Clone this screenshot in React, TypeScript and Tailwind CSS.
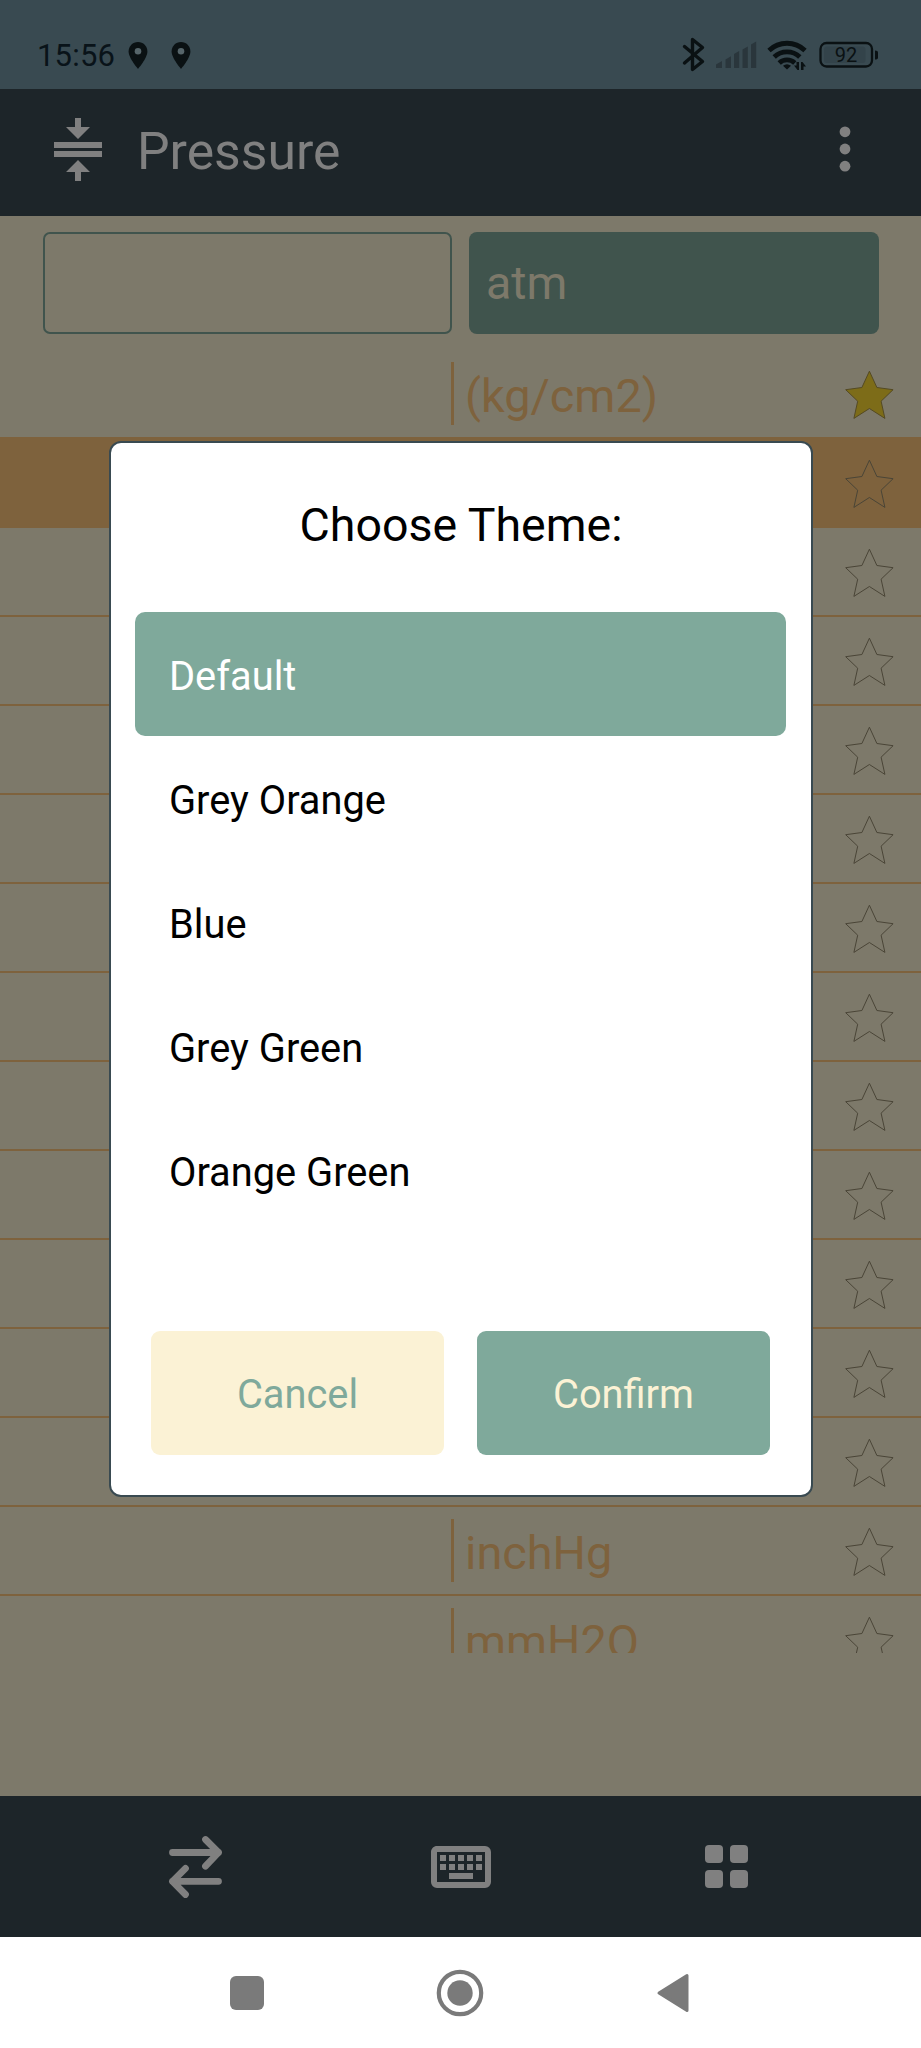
import React from "react";

type Unit = { label?: string; active?: boolean; starred?: boolean };

const units: Unit[] = [
  { label: "(kg/cm2)", starred: true },
  { active: true },
  {}, {}, {}, {}, {}, {}, {}, {}, {}, {}, {},
  { label: "inchHg" },
  { label: "mmH2O" },
];

const themes = ["Default", "Grey Orange", "Blue", "Grey Green", "Orange Green"];

function Pin() {
  return (
    <svg width="20" height="27" viewBox="0 0 20 27">
      <path d="M10 0C4.700 0 .6 4.200 .6 9.400c0 6.600 9.400 17.400 9.400 17.400s9.400-10.800 9.400-17.400C19.400 4.200 15.300 0 10 0z" fill="#0a1113" />
      <circle cx="10" cy="9.300" r="3.300" fill="#56656a" />
    </svg>
  );
}

function StatusBar() {
  return (
    <div className="flex h-[89px] shrink-0 items-start bg-[#394a51] text-[#091319]">
      <div className="flex w-[128px] pl-[37px] pt-[38px] text-[31px] leading-[36px] tracking-[0.2px]">15:56</div>
      <div className="flex gap-[23px] pt-[42px]">
        <Pin />
        <Pin />
      </div>
      <svg className="mt-[34px] ml-auto mr-[41px]" width="200" height="40" viewBox="680 34 200 40">
        <path d="M684.500 46.500 L702.500 61.500 L692.500 69.500 V39.500 L702.500 47.500 L684.500 63" fill="none" stroke="#0a1113" strokeWidth="3.400" strokeLinejoin="round" strokeLinecap="round" />
        <g fill="#2a363c">
          <path d="M716 68v-3.500l6-3.500v7z" />
          <path d="M725.500 68v-8.500l5.500-3.200v11.700z" />
          <path d="M734 68v-14l5.200-3v17z" />
          <path d="M742.500 68v-18.500l5.300-3v21.500z" />
          <path d="M751 68v-23.500l5.200-3v26.500z" />
        </g>
        <g fill="none" stroke="#0a1113" strokeWidth="4.800">
          <path d="M769 50.500 A26 26 0 0 1 805 50.500" />
          <path d="M774.200 57 A18.500 18.500 0 0 1 799.800 57" />
          <path d="M779.200 63 A11.500 11.500 0 0 1 794.800 63" />
        </g>
        <path d="M783 65.800 Q787 62.500 791 65.800 L787 69.500z" fill="#0a1113" />
        <path d="M799 62v8h-1.500l-3.500-4.500h2.500V62zM801 70v-8h1.500l3.500 4.500h-2.500V70z" fill="#0a1113" />
        <rect x="820.500" y="43" width="51.500" height="23.500" rx="6" fill="none" stroke="#0a1113" strokeWidth="2.300" />
        <rect x="824" y="46.500" width="41.500" height="16.500" rx="3" fill="#33434a" />
        <path d="M875 50.500 q3 0 3 2 v5 q0 2 -3 2z" fill="#0a1113" />
        <text x="846" y="62" textAnchor="middle" fontSize="20" fill="#0a1113" fontFamily="Roboto, sans-serif">92</text>
      </svg>
    </div>
  );
}

function Header() {
  return (
    <header className="flex h-[127px] shrink-0 items-center bg-[#1d2529] pl-[42px] pr-[64px] text-[#808080]">
      <svg className="-mt-[4px]" width="72" height="72" viewBox="0 0 24 24" fill="currentColor">
        <path d="M8 19h3v3h2v-3h3l-4-4-4 4zm8-15h-3V1h-2v3H8l4 4 4-4zM4 9h16v2H4zM4 12h16v2H4z" />
      </svg>
      <h1 className="ml-[23px] -mt-px text-[51.700px] leading-[62px]">Pressure</h1>
      <svg className="ml-auto -mt-[8px]" width="24" height="48" viewBox="0 0 24 48" fill="currentColor">
        <circle cx="12" cy="6.800" r="5.400" />
        <circle cx="12" cy="24" r="5.400" />
        <circle cx="12" cy="41.200" r="5.400" />
      </svg>
    </header>
  );
}

function Star({ on }: { on?: boolean }) {
  return (
    <svg className="ml-auto mr-[26px] mt-px" width="50" height="50" viewBox="0 0 50 50">
      <path
        d="M24.400 2.200 L31.900 18.500 L48.100 20.700 L36.100 32.200 L39.900 49.400 L24.400 39.500 L8.900 49.400 L12.700 32.200 L.7 20.700 L16.900 18.500z"
        fill={on ? "#7d6c18" : "none"}
        stroke={on ? "#544a24" : "#4a4537"}
        strokeWidth="1"
        strokeLinejoin="round"
      />
    </svg>
  );
}

function UnitRow({ label, active, starred }: Unit) {
  return (
    <div className={"flex h-[89px] shrink-0 items-center border-b-[2px] border-[#7e623d] " + (active ? "bg-[#7e623d]" : "")}>
      <div className="h-[63px] w-[454px] border-r-[3px] border-[#7e623d]" />
      <div className="ml-[11px] pt-[5px] text-[46.800px] leading-[54px] text-[#7e623d]">{label}</div>
      <Star on={starred} />
    </div>
  );
}

function BottomBar() {
  return (
    <div className="flex h-[141px] shrink-0 items-center justify-between bg-[#1d2529] pl-[159px] pr-[159px] text-[#808080]">
      <svg width="72" height="72" viewBox="159 1830 72 72" fill="none" stroke="currentColor" strokeWidth="6.800" strokeLinecap="round" strokeLinejoin="round">
        <path d="M172.500 1851.500H218.500M205.500 1838.500L218.500 1851.500L205.500 1865.200M218.500 1880.300H172.500M185.500 1867.300L172.500 1880.300L185.500 1893.500" />
      </svg>
      <svg width="72" height="72" viewBox="0 0 24 24" fill="currentColor">
        <path fillRule="evenodd" d="M4 5h16a2 2 0 0 1 2 2v10a2 2 0 0 1-2 2H4a2 2 0 0 1-2-2V7c0-1.100.9-2 2-2zM4 7v10h16V7z" />
        <path d="M5 8h2v2H5zM8 8h2v2H8zM11 8h2v2h-2zM14 8h2v2h-2zM17 8h2v2h-2zM5 11h2v2H5zM8 11h2v2H8zM11 11h2v2h-2zM14 11h2v2h-2zM17 11h2v2h-2zM8 14h8v2H8z" />
      </svg>
      <div className="grid w-[72px] grid-cols-[18px_18px] justify-center gap-[7px]">
        <div className="h-[18px] rounded-[4px] bg-[#808080]" />
        <div className="h-[18px] rounded-[4px] bg-[#808080]" />
        <div className="h-[18px] rounded-[4px] bg-[#808080]" />
        <div className="h-[18px] rounded-[4px] bg-[#808080]" />
      </div>
    </div>
  );
}

function SystemNav() {
  return (
    <nav className="flex h-[111px] shrink-0 items-center bg-white pl-[230px]">
      <div className="h-[34px] w-[34px] rounded-[6px] bg-[#7a7a7a]" />
      <svg className="ml-[172px]" width="48" height="48" viewBox="0 0 48 48">
        <circle cx="24" cy="24" r="21.200" fill="none" stroke="#7a7a7a" strokeWidth="4.200" />
        <circle cx="24" cy="24" r="12.700" fill="#7a7a7a" />
      </svg>
      <svg className="ml-[171px]" width="36" height="44" viewBox="0 0 36 44">
        <path d="M4 22L32 4.500V39.500z" fill="#7a7a7a" stroke="#7a7a7a" strokeWidth="3" strokeLinejoin="round" />
      </svg>
    </nav>
  );
}

function ThemeDialog() {
  return (
    <div className="absolute top-[441px] left-[109px] flex h-[1056px] w-[704px] flex-col rounded-[12px] border-[2.500px] border-[#394a51] bg-white text-black">
      <h2 className="mt-[54px] text-center text-[46.500px] leading-[56px]">Choose Theme:</h2>
      <ul className="mt-[59px] flex flex-col pr-[25px] pl-[24px]">
        {themes.map((name, i) => (
          <li
            key={name}
            className={
              "flex h-[124px] items-center rounded-[10px] pl-[34px] pt-[5px] text-[39.800px] leading-[46px] " +
              (i === 0 ? "bg-[#7fa99b] text-white" : "")
            }
          >
            {name}
          </li>
        ))}
      </ul>
      <div className="mt-auto mb-[40px] flex gap-[33px] pr-[41px] pl-[40px] text-[39.800px] leading-[46px]">
        <button className="h-[124px] flex-1 rounded-[9px] bg-[#fbf2d5] pt-[3px] text-[#7fa99b]">Cancel</button>
        <button className="h-[124px] flex-1 rounded-[9px] bg-[#7fa99b] pt-[3px] text-[#fbf2d5]">Confirm</button>
      </div>
    </div>
  );
}

export default function App() {
  return (
    <div className="relative flex h-[2048px] w-[921px] flex-col overflow-hidden bg-[#7d796a] font-[Roboto,sans-serif]">
      <StatusBar />
      <Header />
      <div className="grid shrink-0 grid-cols-2 gap-[17px] px-[42.500px] pt-[16px]">
        <div className="h-[102px] rounded-[7px] border-[2px] border-[#40544d]" />
        <div className="flex h-[102px] items-center rounded-[8px] bg-[#40544d] pl-[17px] text-[46.500px] leading-[54px] text-[#7d796a]">atm</div>
      </div>
      <div className="mt-[16px] flex h-[1303px] shrink-0 flex-col overflow-hidden">
        {units.map((u, i) => (
          <UnitRow key={i} {...u} />
        ))}
      </div>
      <div className="flex-1" />
      <BottomBar />
      <SystemNav />
      <ThemeDialog />
    </div>
  );
}
